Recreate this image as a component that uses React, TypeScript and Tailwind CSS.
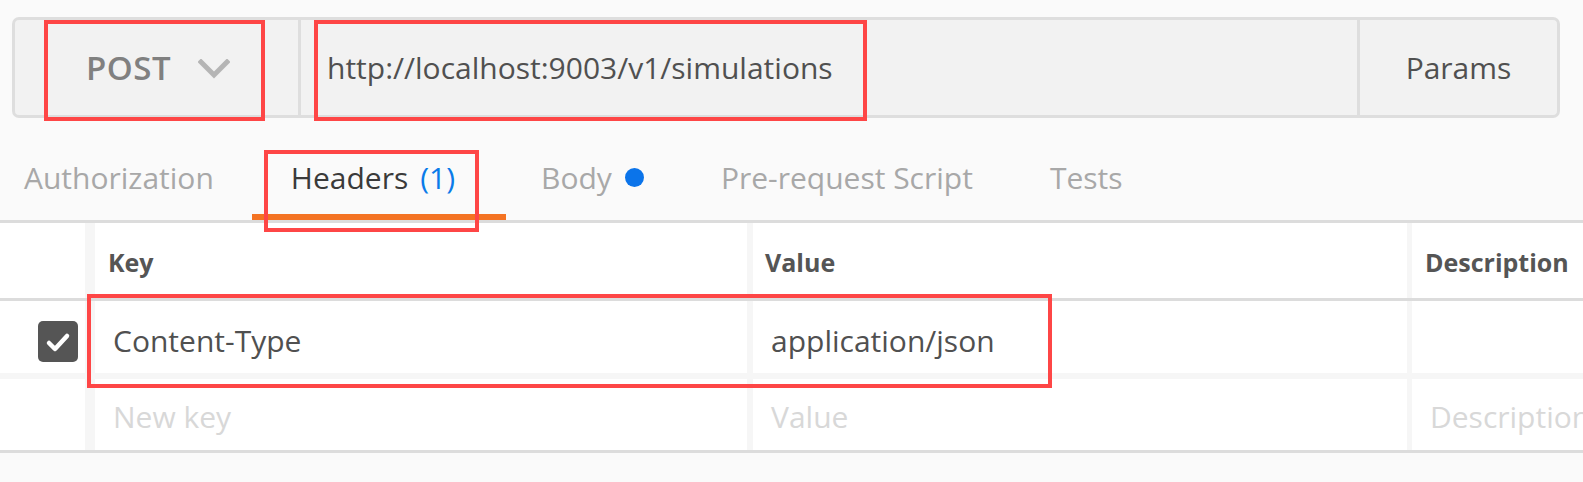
import React from 'react';

const tabs = ['Authorization', 'Headers', 'Body', 'Pre-request Script', 'Tests'];

function Chevron() {
  return (
    <svg width="32" height="20" viewBox="0 0 32 20" fill="none">
      <polyline points="3,3 16,16 29,3" stroke="#b5b5b5" strokeWidth="5" strokeLinecap="square" />
    </svg>
  );
}

function Check() {
  return (
    <div className="w-[40px] h-[41px] rounded-[5px] bg-[#555555] flex items-center justify-center">
      <svg width="26" height="22" viewBox="0 0 26 22" fill="none">
        <polyline points="4,12 10,18 22,5" stroke="#ffffff" strokeWidth="4.5" strokeLinecap="round" strokeLinejoin="round" />
      </svg>
    </div>
  );
}

export default function App() {
  return (
    <div
      className="relative w-full h-[482px] bg-[#fafafa] overflow-hidden"
      style={{ fontFamily: '"Open Sans", "Noto Sans", sans-serif' }}
    >
      {/* Request bar */}
      <div className="pt-[17px] pl-[12px] pr-[23px]">
        <div className="flex h-[101px] rounded-[7px] border-[3px] border-[#dedede] bg-[#f2f2f2]">
          <div className="w-[286px] flex items-center pl-[71px] border-r-[3px] border-[#dedede]">
            <span className="text-[33px] font-semibold text-[#808080] tracking-[0.5px]">POST</span>
            <span className="ml-[27px] mt-[2px]">
              <Chevron />
            </span>
          </div>
          <div className="flex-1 flex items-center pl-[26px] text-[30px] text-[#505050]">
            http://localhost:9003/v1/simulations
          </div>
          <div className="w-[200px] flex items-center justify-center border-l-[3px] border-[#dedede] text-[30px] text-[#505050]">
            Params
          </div>
        </div>
      </div>

      {/* Tabs */}
      <div className="h-[105px] pt-[16px] pl-[24px] flex items-stretch gap-[77px] border-b-[3px] border-[#dcdcdc] text-[30px]">
        {tabs.map((t) => {
          if (t === 'Headers') {
            return (
              <div key={t} className="relative flex items-center text-[#3a3a3a]">
                <span>Headers</span>
                <span className="ml-[12px] text-[#0a7be9]">(1)</span>
                <div className="absolute bottom-0 -left-[39px] -right-[51px] h-[6px] bg-[#f47323]" />
              </div>
            );
          }
          if (t === 'Body') {
            return (
              <div key={t} className="ml-[9px] flex items-center text-[#a8a8a8]">
                <span>Body</span>
                <span className="ml-[13px] w-[19px] h-[19px] rounded-full bg-[#0b74ea]" />
              </div>
            );
          }
          return (
            <div key={t} className="flex items-center text-[#a8a8a8]">
              {t}
            </div>
          );
        })}
      </div>

      {/* Headers table */}
      <div className="bg-[#f6f6f6]">
        <div className="flex h-[78px] border-b-[3px] border-[#dcdcdc] text-[25px] font-bold text-[#555555]">
          <div className="w-[85px] bg-white" />
          <div className="ml-[10px] w-[652px] bg-white flex items-center pl-[13px] pt-[4px]">Key</div>
          <div className="ml-[6px] w-[654px] bg-white flex items-center pl-[12px] pt-[4px]">Value</div>
          <div className="ml-[5px] flex-1 bg-white flex items-center pl-[13px] pt-[4px] whitespace-nowrap">Description</div>
        </div>
        <div className="flex h-[72px] text-[30px] text-[#505050]">
          <div className="w-[85px] bg-white flex items-center justify-end pr-[7px] pt-[9px]">
            <Check />
          </div>
          <div className="ml-[10px] w-[652px] bg-white flex items-center pl-[18px] pt-[7px]">Content-Type</div>
          <div className="ml-[6px] w-[654px] bg-white flex items-center pl-[18px] pt-[7px]">application/json</div>
          <div className="ml-[5px] flex-1 bg-white" />
        </div>
        <div className="h-[6px]" />
        <div className="flex h-[74px] border-b-[3px] border-[#dcdcdc] text-[30px] text-[#d8d8d8]">
          <div className="w-[85px] bg-white" />
          <div className="ml-[10px] w-[652px] bg-white flex items-center pl-[18px] pt-[3px]">New key</div>
          <div className="ml-[6px] w-[654px] bg-white flex items-center pl-[18px] pt-[3px]">Value</div>
          <div className="ml-[5px] flex-1 bg-white flex items-center pl-[18px] pt-[3px] whitespace-nowrap overflow-hidden">
            Description
          </div>
        </div>
      </div>

      {/* Annotation boxes */}
      <div className="absolute left-[44px] top-[20px] w-[221px] h-[101px] border-[4px] border-[#fe4646]" />
      <div className="absolute left-[314px] top-[20px] w-[553px] h-[101px] border-[4px] border-[#fe4646]" />
      <div className="absolute left-[264px] top-[150px] w-[215px] h-[82px] border-[4px] border-[#fe4646]" />
      <div className="absolute left-[87px] top-[294px] w-[965px] h-[94px] border-[4px] border-[#fe4646]" />
    </div>
  );
}
